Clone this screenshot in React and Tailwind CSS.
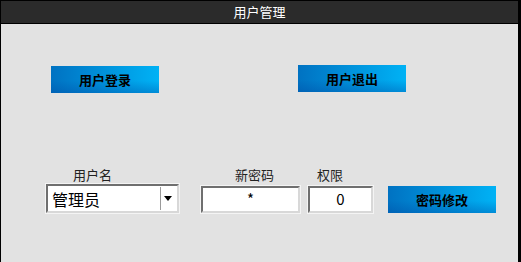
import React from 'react';

const font = { fontFamily: '"Noto Sans CJK SC", "Noto Sans", sans-serif' };

const BlueButton = ({ label, className = '' }) => (
  <button
    className={`w-[108px] h-[27px] flex items-center justify-center text-[13px] font-bold text-black bg-[linear-gradient(to_bottom,rgba(255,255,255,0)_55%,rgba(0,70,160,0.35)),linear-gradient(to_right,#0072c2,#00b2f5)] ${className}`}
  >
    {label}
  </button>
);

const sunken =
  'bg-white border-2 border-t-[#6f6f6f] border-l-[#6f6f6f] border-b-[#d8d8d8] border-r-[#d8d8d8] shadow-[0_0_0_1px_#f4f4f4]';

export default function App() {
  return (
    <div style={font} className="w-[521px] h-[262px] flex flex-col bg-[#e2e2e2] border-l border-r-[3px] border-black">
      <div className="h-[24px] shrink-0 bg-[#2b2b2b] border-t border-b border-black flex items-center justify-center text-white text-[13px]">
        用户管理
      </div>

      <div className="flex mt-[41px]">
        <BlueButton label="用户登录" className="ml-[50px] mt-[1px]" />
        <BlueButton label="用户退出" className="ml-[139px]" />
      </div>

      <div className="flex items-end mt-[73px]">
        <div className="flex flex-col ml-[45px]">
          <span className="text-[13px] text-[#222] pl-[27px] leading-[17px] mb-[1px]">用户名</span>
          <div className={`w-[133px] h-[29px] flex items-center ${sunken}`}>
            <span className="flex-1 pl-[4px] text-[16px] text-black leading-none">管理员</span>
            <div className="w-[15px] h-[23px] mr-[2px] border-l border-[#9a9a9a] bg-white flex items-center justify-center">
              <svg width="8" height="5" viewBox="0 0 8 5"><path d="M0 0h8L4 5z" fill="#000" /></svg>
            </div>
          </div>
        </div>

        <div className="flex flex-col ml-[22px]">
          <span className="text-[13px] text-[#222] pl-[34px] leading-[17px] mb-[3px]">新密码</span>
          <div className={`w-[99px] h-[27px] flex items-center justify-center text-[15px] text-black ${sunken}`}>
            *
          </div>
        </div>

        <div className="flex flex-col ml-[8px]">
          <span className="text-[13px] text-[#222] pl-[9px] leading-[17px] mb-[3px]">权限</span>
          <div className={`w-[65px] h-[27px] flex items-center justify-center text-[15px] text-black ${sunken}`}>
            0
          </div>
        </div>

        <BlueButton label="密码修改" className="ml-[15px]" />
      </div>
    </div>
  );
}
